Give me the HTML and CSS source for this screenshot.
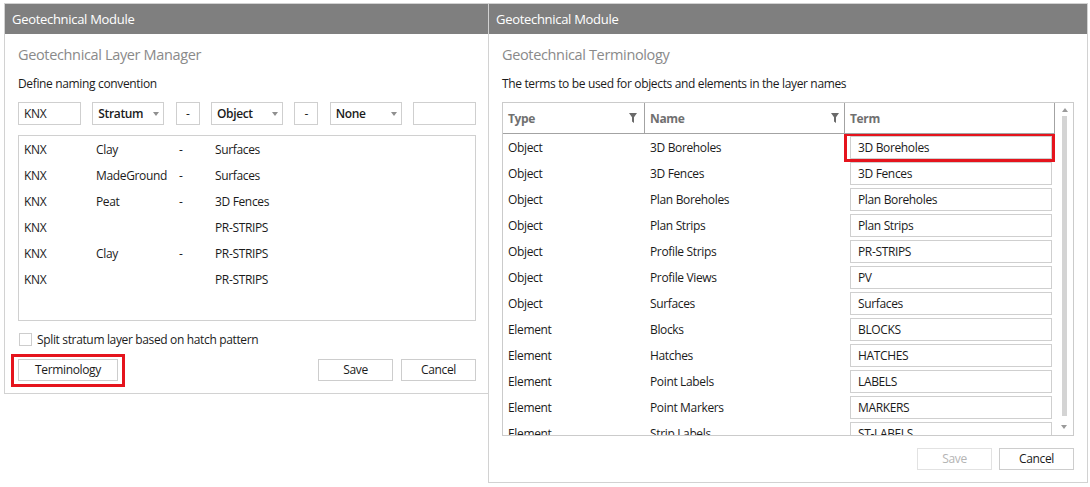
FILE: index.html
```html
<!DOCTYPE html>
<html>
<head>
<meta charset="utf-8">
<title>Geotechnical Module</title>
<link rel="stylesheet" href="styles.css">
</head>
<body>
<div class="desk">
  <section class="win win-left">
    <header class="win-head">Geotechnical Module</header>
    <div class="win-body">
      <h1 class="title">Geotechnical Layer Manager</h1>
      <p class="sub">Define naming convention</p>
      <div class="conv">
        <div class="tb tb-short">KNX</div>
        <div class="cb">Stratum<span class="arr"></span></div>
        <div class="tb tb-dash">-</div>
        <div class="cb">Object<span class="arr"></span></div>
        <div class="tb tb-dash">-</div>
        <div class="cb">None<span class="arr"></span></div>
        <div class="tb tb-short"></div>
      </div>
      <div class="list">
        <div class="lrow"><span>KNX</span><span>Clay</span><span>-</span><span>Surfaces</span></div>
        <div class="lrow"><span>KNX</span><span>MadeGround</span><span>-</span><span>Surfaces</span></div>
        <div class="lrow"><span>KNX</span><span>Peat</span><span>-</span><span>3D Fences</span></div>
        <div class="lrow"><span>KNX</span><span></span><span></span><span>PR-STRIPS</span></div>
        <div class="lrow"><span>KNX</span><span>Clay</span><span>-</span><span>PR-STRIPS</span></div>
        <div class="lrow"><span>KNX</span><span></span><span></span><span>PR-STRIPS</span></div>
      </div>
      <div class="chk"><span class="chk-box"></span><span>Split stratum layer based on hatch pattern</span></div>
      <div class="btns">
        <div class="hl-wrap"><div class="btn btn-wide">Terminology</div><span class="hl hl-btn"></span></div>
        <div class="btns-right">
          <div class="btn">Save</div>
          <div class="btn">Cancel</div>
        </div>
      </div>
    </div>
  </section>

  <section class="win win-right">
    <header class="win-head">Geotechnical Module</header>
    <div class="win-body">
      <h1 class="title">Geotechnical Terminology</h1>
      <p class="sub">The terms to be used for objects and elements in the layer names</p>
      <div class="grid">
        <div class="grid-main">
          <div class="ghead">
            <div class="gh gh-type">Type<svg class="funnel" width="8" height="10" viewBox="0 0 8 10"><path d="M0 0H8L5 4.2V10L3 8.6V4.2Z" fill="#6a6a6a"/></svg></div>
            <div class="gh gh-name">Name<svg class="funnel" width="8" height="10" viewBox="0 0 8 10"><path d="M0 0H8L5 4.2V10L3 8.6V4.2Z" fill="#6a6a6a"/></svg></div>
            <div class="gh gh-term">Term</div>
          </div>
          <div class="gbody">
            <div class="grow"><span class="c-type">Object</span><span class="c-name">3D Boreholes</span><span class="c-term"><span class="term">3D Boreholes<span class="hl hl-term"></span></span></span></div>
            <div class="grow"><span class="c-type">Object</span><span class="c-name">3D Fences</span><span class="c-term"><span class="term">3D Fences</span></span></div>
            <div class="grow"><span class="c-type">Object</span><span class="c-name">Plan Boreholes</span><span class="c-term"><span class="term">Plan Boreholes</span></span></div>
            <div class="grow"><span class="c-type">Object</span><span class="c-name">Plan Strips</span><span class="c-term"><span class="term">Plan Strips</span></span></div>
            <div class="grow"><span class="c-type">Object</span><span class="c-name">Profile Strips</span><span class="c-term"><span class="term">PR-STRIPS</span></span></div>
            <div class="grow"><span class="c-type">Object</span><span class="c-name">Profile Views</span><span class="c-term"><span class="term">PV</span></span></div>
            <div class="grow"><span class="c-type">Object</span><span class="c-name">Surfaces</span><span class="c-term"><span class="term">Surfaces</span></span></div>
            <div class="grow"><span class="c-type">Element</span><span class="c-name">Blocks</span><span class="c-term"><span class="term">BLOCKS</span></span></div>
            <div class="grow"><span class="c-type">Element</span><span class="c-name">Hatches</span><span class="c-term"><span class="term">HATCHES</span></span></div>
            <div class="grow"><span class="c-type">Element</span><span class="c-name">Point Labels</span><span class="c-term"><span class="term">LABELS</span></span></div>
            <div class="grow"><span class="c-type">Element</span><span class="c-name">Point Markers</span><span class="c-term"><span class="term">MARKERS</span></span></div>
            <div class="grow"><span class="c-type">Element</span><span class="c-name">Strip Labels</span><span class="c-term"><span class="term">ST-LABELS</span></span></div>
          </div>
        </div>
        <div class="vscroll">
          <span class="sc-up"></span>
          <span class="sc-thumb"></span>
          <span class="sc-down"></span>
        </div>
      </div>
      <div class="btns btns-end">
        <div class="btn btn-disabled">Save</div>
        <div class="btn">Cancel</div>
      </div>
    </div>
  </section>
</div>
</body>
</html>
```

FILE: styles.css
```css
* { box-sizing: border-box; }
html, body { margin: 0; padding: 0; background: #ffffff; }
body {
  font-family: "Open Sans", "Noto Sans", "Liberation Sans", sans-serif;
  font-size: 12px;
  color: #1b1b1b;
  letter-spacing: -0.35px;
}
.desk {
  display: flex;
  align-items: flex-start;
  padding: 3px 0 0 4px;
}
.win {
  border: 1px solid #d2d2d2;
  background: #fff;
  display: flex;
  flex-direction: column;
}
.win-left { width: 485px; height: 391px; }
.win-right { width: 600px; height: 480px; margin-left: -1px; }
.win-head {
  height: 30px;
  background: #7f7f7f;
  color: #ffffff;
  font-size: 13px;
  line-height: 30px;
  padding-left: 7px;
  letter-spacing: -0.3px;
}
.win-body {
  flex: 1;
  display: flex;
  flex-direction: column;
  padding: 11px 12px 13px 13px;
}
.win-right .win-body { padding-right: 13px; }
.title {
  margin: 0;
  font-size: 14.5px;
  font-weight: 400;
  line-height: 20px;
  color: #8a8a8a;
}
.sub {
  margin: 11px 0 0;
  line-height: 16px;
  color: #1b1b1b;
}
.conv {
  margin-top: 10px;
  display: flex;
  justify-content: space-between;
  height: 23px;
}
.tb, .cb {
  border: 1px solid #cfcfcf;
  height: 23px;
  line-height: 21px;
  padding-left: 5px;
}
.tb-short { width: 63px; }
.tb-dash { width: 24px; padding-left: 0; text-align: center; }
.cb {
  width: 72px;
  display: flex;
  align-items: center;
  justify-content: space-between;
  padding-right: 4px;
  font-weight: 600;
}
.arr {
  width: 0; height: 0;
  border-left: 3px solid transparent;
  border-right: 3px solid transparent;
  border-top: 4px solid #8f8f8f;
}
.list {
  margin-top: 10px;
  height: 186px;
  border: 1px solid #d0d0d0;
  padding: 1px 0 0 5px;
}
.lrow {
  display: grid;
  grid-template-columns: 72px 83px 36px 1fr;
  height: 26px;
  line-height: 26px;
}
.chk {
  margin-top: 11px;
  display: flex;
  align-items: center;
  gap: 5px;
  height: 14px;
  padding-left: 1px;
}
.chk-box {
  width: 13px; height: 13px;
  border: 1px solid #cdcdcd;
  background: #fff;
}
.btns {
  margin-top: 13px;
  display: flex;
  justify-content: space-between;
  align-items: center;
}
.btns-right { display: flex; gap: 8px; }
.btns-end { justify-content: flex-end; gap: 7px; margin-top: 12px; }
.btn {
  width: 75px;
  height: 22px;
  border: 1px solid #cdcdcd;
  text-align: center;
  line-height: 20px;
  background: #fff;
  color: #1b1b1b;
}
.btn-wide { width: 100px; }
.btn-disabled { color: #b4b4b4; border-color: #e2e2e2; }
.hl-wrap { position: relative; }
.hl {
  position: absolute;
  border: 3px solid #e5141d;
  pointer-events: none;
}
.hl-btn { top: -5px; bottom: -6px; left: -7px; right: -7px; }

/* grid */
.grid {
  margin-top: 10px;
  height: 334px;
  border: 1px solid #cbcbcb;
  display: flex;
}
.grid-main {
  width: 552px;
  display: flex;
  flex-direction: column;
  overflow: hidden;
}
.ghead {
  display: flex;
  height: 31px;
  flex: none;
  border-bottom: 1px solid #a3a3a3;
  border-right: 1px solid #a3a3a3;
}
.gh {
  position: relative;
  display: flex;
  align-items: center;
  justify-content: space-between;
  font-weight: 700;
  color: #707070;
  padding-left: 5px;
  padding-right: 7px;
  border-right: 1px solid #a3a3a3;
}
.gh-type { width: 142px; }
.gh-name { width: 200px; padding-right: 5px; }
.gh-term { flex: 1; border-right: 0; }
.gbody { flex: 1; overflow: hidden; }
.grow {
  display: flex;
  height: 26px;
  align-items: center;
}
.c-type { width: 142px; padding-left: 5px; }
.c-name { width: 200px; padding-left: 5px; }
.c-term { width: 209px; padding-left: 5px; }
.term {
  position: relative;
  display: block;
  width: 202px;
  height: 23px;
  line-height: 21px;
  border: 1px solid #cfcfcf;
  padding-left: 7px;
}
.hl-term { top: -4px; bottom: -4px; left: -7px; right: -4px; }
.vscroll {
  flex: 1;
  position: relative;
  display: flex;
  flex-direction: column;
  align-items: center;
  padding-top: 5px;
}
.sc-up {
  width: 0; height: 0;
  border-left: 3px solid transparent;
  border-right: 3px solid transparent;
  border-bottom: 4px solid #9a9a9a;
  margin-left: 1px;
}
.sc-thumb {
  width: 5px;
  height: 300px;
  background: #d4d4d4;
  margin-top: 4px;
  margin-left: 1px;
}
.sc-down {
  width: 0; height: 0;
  border-left: 3px solid transparent;
  border-right: 3px solid transparent;
  border-top: 4px solid #9a9a9a;
  margin-top: auto;
  margin-bottom: 6px;
}
```
